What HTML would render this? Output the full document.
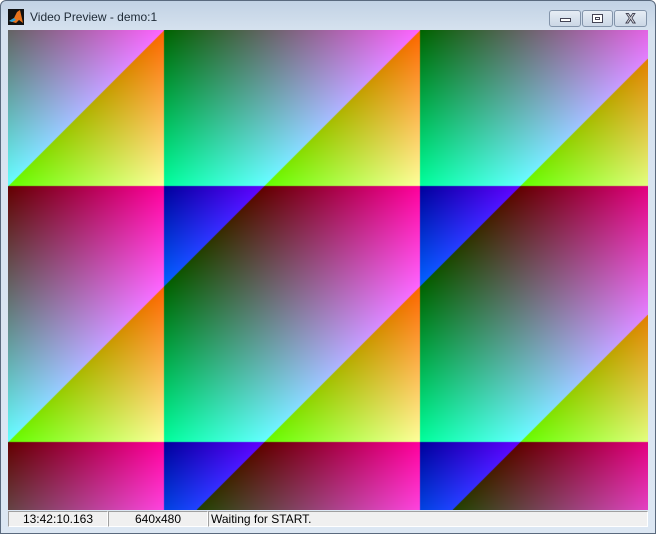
<!DOCTYPE html>
<html><head><meta charset="utf-8"><style>
*{margin:0;padding:0;box-sizing:border-box}
body{width:656px;height:534px;overflow:hidden;background:#fff}
#win{position:absolute;left:0;top:0;width:656px;height:534px;border:1px solid #5a6a7e;border-radius:6px 6px 0 0;background:linear-gradient(#c2d2e4,#d6e2ef 30px,#dce7f3);}
#title{position:absolute;left:29px;top:9px;font:12px "Liberation Sans",sans-serif;color:#1e2a36}
#icon{position:absolute;left:7px;top:8px;width:16px;height:16px;background:#111}
.btn{position:absolute;top:9px;height:17px;border:1px solid #8394aa;border-radius:3px;background:linear-gradient(#e6edf5,#cbd7e5);}
#cv{position:absolute;left:7px;top:29px;width:640px;height:480px}
.st{position:absolute;top:510px;height:16px;background:#f0f0f0;border:1px solid #a0a0a0;border-right-color:#fff;border-bottom-color:#fff;font:12px "Liberation Sans",sans-serif;color:#000;line-height:14px}
</style></head><body>
<div id="win">
<div id="icon"><svg width="16" height="16"><path d="M1 12 L6 9 L9 3 L12 1 L15 14 L11 11 L8 14 Z" fill="#e8731c"/><path d="M1 12 L6 9 L8 11 L4 13Z" fill="#2aa0d8"/></svg></div>
<div id="title">Video Preview - demo:1</div>
<div class="btn" style="left:548px;width:32px"><div style="position:absolute;left:10px;top:7px;width:11px;height:4px;border:1px solid #445;background:#fff"></div></div>
<div class="btn" style="left:581px;width:31px"><div style="position:absolute;left:9px;top:3px;width:11px;height:9px;border:1px solid #445;background:#fff"><div style="margin:2px;height:3px;border:1px solid #445"></div></div></div>
<div class="btn" style="left:613px;width:33px;text-align:center;font:bold 14px 'Liberation Sans',sans-serif;line-height:15px;color:#fff;-webkit-text-stroke:1px #445">X</div>
<canvas id="cv" width="640" height="480"></canvas>
<div class="st" style="left:7px;width:100px;text-align:center">13:42:10.163</div>
<div class="st" style="left:107px;width:100px;text-align:center">640x480</div>
<div class="st" style="left:207px;width:440px;padding-left:2px">Waiting for START.</div>
</div>
<script>
var c=document.getElementById('cv').getContext('2d');var d=c.createImageData(640,480),p=d.data,k=0;
for(var j=0;j<480;j++)for(var i=0;i<640;i++){var r=(i+100)%256,g=(j+100)%256,b=(r+g+156)%256;p[k++]=r;p[k++]=g;p[k++]=b;p[k++]=255;}
c.putImageData(d,0,0);
</script>
</body></html>
